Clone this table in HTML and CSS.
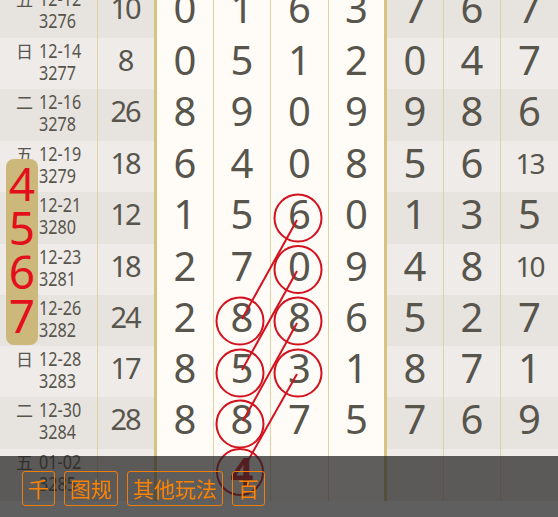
FILE: index.html
```html
<!DOCTYPE html>
<html lang="zh">
<head>
<meta charset="utf-8">
<title>走势图</title>
<link rel="stylesheet" href="styles.css">
</head>
<body>
<div class="board">
  <div class="sheet">
    <div class="row">
      <div class="c g d"><span class="wk">五</span><span class="dt">12-12</span><span class="no">3276</span></div>
      <div class="c g s">10</div>
      <div class="c w n">0</div><div class="c w n">1</div><div class="c w n">6</div><div class="c w n e">3</div>
      <div class="c g n">7</div><div class="c g n">6</div><div class="c g n">7</div>
    </div>
    <div class="row">
      <div class="c g d"><span class="wk">日</span><span class="dt">12-14</span><span class="no">3277</span></div>
      <div class="c g s">8</div>
      <div class="c w n">0</div><div class="c w n">5</div><div class="c w n">1</div><div class="c w n e">2</div>
      <div class="c g n">0</div><div class="c g n">4</div><div class="c g n">7</div>
    </div>
    <div class="row">
      <div class="c g d"><span class="wk">二</span><span class="dt">12-16</span><span class="no">3278</span></div>
      <div class="c g s">26</div>
      <div class="c w n">8</div><div class="c w n">9</div><div class="c w n">0</div><div class="c w n e">9</div>
      <div class="c g n">9</div><div class="c g n">8</div><div class="c g n">6</div>
    </div>
    <div class="row">
      <div class="c g d"><span class="wk">五</span><span class="dt">12-19</span><span class="no">3279</span></div>
      <div class="c g s">18</div>
      <div class="c w n">6</div><div class="c w n">4</div><div class="c w n">0</div><div class="c w n e">8</div>
      <div class="c g n">5</div><div class="c g n">6</div><div class="c g n two">13</div>
    </div>
    <div class="row">
      <div class="c g d"><span class="wk"></span><span class="dt">12-21</span><span class="no">3280</span></div>
      <div class="c g s">12</div>
      <div class="c w n">1</div><div class="c w n">5</div><div class="c w n">6</div><div class="c w n e">0</div>
      <div class="c g n">1</div><div class="c g n">3</div><div class="c g n">5</div>
    </div>
    <div class="row">
      <div class="c g d"><span class="wk"></span><span class="dt">12-23</span><span class="no">3281</span></div>
      <div class="c g s">18</div>
      <div class="c w n">2</div><div class="c w n">7</div><div class="c w n">0</div><div class="c w n e">9</div>
      <div class="c g n">4</div><div class="c g n">8</div><div class="c g n two">10</div>
    </div>
    <div class="row">
      <div class="c g d"><span class="wk"></span><span class="dt">12-26</span><span class="no">3282</span></div>
      <div class="c g s">24</div>
      <div class="c w n">2</div><div class="c w n">8</div><div class="c w n">8</div><div class="c w n e">6</div>
      <div class="c g n">5</div><div class="c g n">2</div><div class="c g n">7</div>
    </div>
    <div class="row">
      <div class="c g d"><span class="wk">日</span><span class="dt">12-28</span><span class="no">3283</span></div>
      <div class="c g s">17</div>
      <div class="c w n">8</div><div class="c w n">5</div><div class="c w n">3</div><div class="c w n e">1</div>
      <div class="c g n">8</div><div class="c g n">7</div><div class="c g n">1</div>
    </div>
    <div class="row">
      <div class="c g d"><span class="wk">二</span><span class="dt">12-30</span><span class="no">3284</span></div>
      <div class="c g s">28</div>
      <div class="c w n">8</div><div class="c w n">8</div><div class="c w n">7</div><div class="c w n e">5</div>
      <div class="c g n">7</div><div class="c g n">6</div><div class="c g n">9</div>
    </div>
    <div class="row">
      <div class="c g d"><span class="wk">五</span><span class="dt">01-02</span><span class="no">3285</span></div>
      <div class="c g s"></div>
      <div class="c w n"></div><div class="c w n red">4</div><div class="c w n"></div><div class="c w n e"></div>
      <div class="c g n"></div><div class="c g n"></div><div class="c g n"></div>
    </div>
  </div>

  <div class="pill"><span>4</span><span>5</span><span>6</span><span>7</span></div>

  <svg class="marks" width="558" height="501" viewBox="0 0 558 501">
    <g fill="none" stroke="#d3121e" stroke-width="2">
      <circle cx="298" cy="218" r="23.5"/>
      <circle cx="298" cy="269.5" r="23.5"/>
      <circle cx="298" cy="321" r="23.5"/>
      <circle cx="298" cy="373" r="23.5"/>
      <circle cx="240" cy="321" r="23.5"/>
      <circle cx="240" cy="373" r="23.5"/>
      <circle cx="240" cy="424" r="23.5"/>
      <circle cx="240" cy="472" r="23"/>
      <line x1="297" y1="220" x2="242" y2="319"/>
      <line x1="297" y1="271" x2="242" y2="370"/>
      <line x1="297" y1="323" x2="243" y2="421"/>
      <line x1="297" y1="374" x2="245" y2="466"/>
    </g>
  </svg>
</div>

<div class="bar">
  <span class="btn">千</span>
  <span class="btn">图规</span>
  <span class="btn">其他玩法</span>
  <span class="btn">百</span>
</div>
</body>
</html>
```

FILE: styles.css
```css
html, body {
  margin: 0;
  padding: 0;
  background: #ffffff;
  overflow: hidden;
}

body {
  width: 558px;
  height: 517px;
  font-family: "Noto Sans", "Noto Sans CJK SC", sans-serif;
  color: #57554c;
}

.board {
  position: relative;
  width: 558px;
  height: 501px;
  overflow: hidden;
}

.sheet {
  margin-top: -14px;
}

.row {
  display: grid;
  grid-template-columns: 98px 59px 57px 57px 58px 58px 57px 57px 57px;
  height: 51px;
  box-sizing: border-box;
}

.row:nth-child(1),
.row:nth-child(3),
.row:nth-child(5),
.row:nth-child(9),
.row:nth-child(10) {
  height: 52px;
}

.c {
  box-sizing: border-box;
  border-right: 1px solid #e0d3a3;
  border-bottom: 1px solid #e0d3a3;
}

.c:last-child {
  border-right: none;
}

.s,
.e {
  border-right: 3px solid #d6c37f;
}

.row:nth-child(1) .c,
.row:nth-child(5) .c,
.row:nth-child(9) .c,
.row:nth-child(10) .c {
  border-bottom: 3px solid #d6c37f;
}

.w {
  background: #fffcf8;
}

.row:nth-child(odd) .g {
  background: #e7e3df;
}

.row:nth-child(even) .g {
  background: #eeebe8;
}

.d {
  display: grid;
  grid-template-columns: 23px auto;
  grid-template-rows: 22px 22px;
  justify-content: start;
  align-content: center;
  align-items: center;
  padding-left: 16px;
  padding-bottom: 6px;
  line-height: 22px;
}

.wk {
  font-family: "Noto Sans CJK SC", sans-serif;
  font-size: 17px;
}

.dt,
.no {
  font-size: 19px;
  transform: scaleX(0.85);
  transform-origin: left center;
}

.no {
  grid-column: 2;
}

.s,
.n {
  display: flex;
  align-items: center;
  justify-content: center;
  line-height: 1.1;
  padding-bottom: 10px;
}

.s {
  font-size: 29px;
  letter-spacing: -2px;
  padding-right: 2px;
}

.n {
  font-size: 40px;
}

.n.two {
  font-size: 28px;
  letter-spacing: -2px;
}

.n.red {
  color: #d3121e;
  font-weight: bold;
}

.pill {
  position: absolute;
  left: 6px;
  top: 159px;
  width: 32px;
  height: 186px;
  box-sizing: border-box;
  padding-top: 2px;
  border-radius: 8px;
  background: #cbb87a;
  display: flex;
  flex-direction: column;
  align-items: center;
}

.pill span {
  color: #e3101c;
  font-size: 46px;
  line-height: 44px;
}

.marks {
  position: absolute;
  left: 0;
  top: 0;
  pointer-events: none;
}

.bar {
  position: fixed;
  left: 0;
  bottom: 0;
  width: 558px;
  height: 61px;
  box-sizing: border-box;
  padding: 15px 0 0 22px;
  background: rgba(35, 35, 35, 0.73);
  display: flex;
  align-items: flex-start;
  gap: 9px;
}

.btn {
  height: 35px;
  box-sizing: border-box;
  padding: 0 5px;
  border: 1px solid #f07c0c;
  border-radius: 3px;
  color: #ff8200;
  font-family: "Noto Sans CJK SC", sans-serif;
  font-size: 21px;
  line-height: 33px;
}
```
